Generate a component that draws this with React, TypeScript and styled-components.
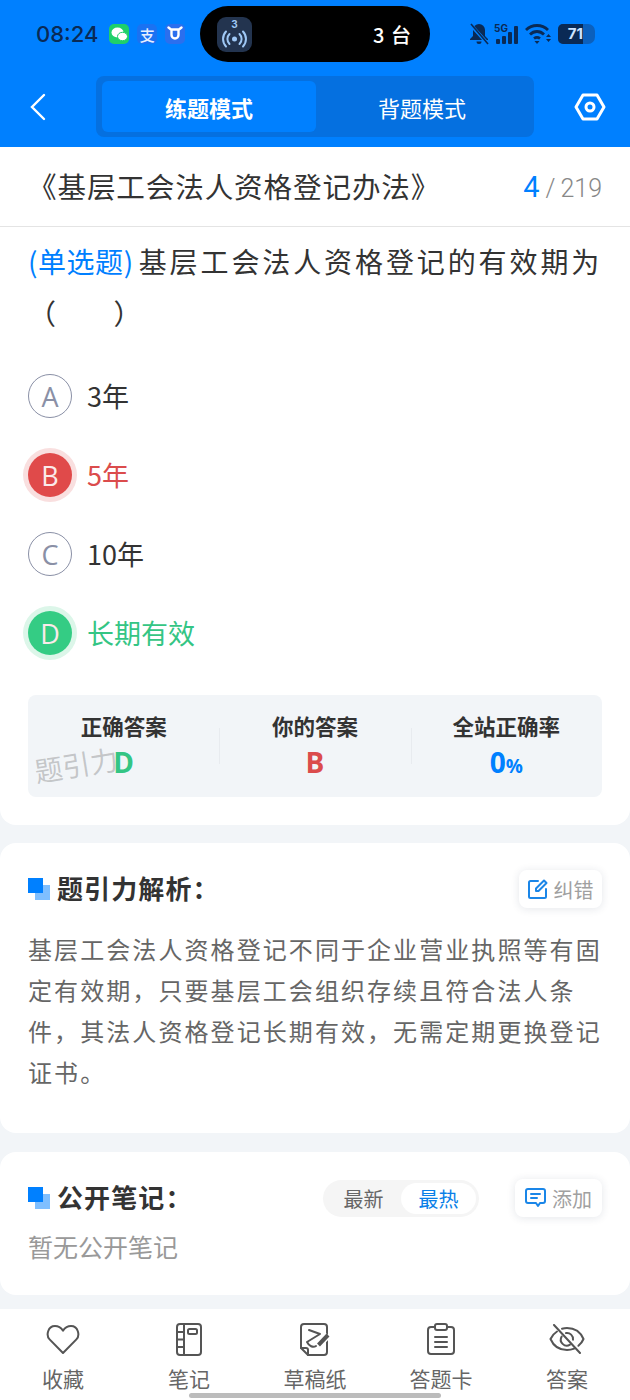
import styled, { createGlobalStyle } from 'styled-components';

const GlobalStyle = createGlobalStyle`
  html, body {
    margin: 0;
    padding: 0;
    background: #f2f5f8;
    font-family: 'Noto Sans CJK SC', 'Noto Sans', sans-serif;
  }
  * {
    box-sizing: border-box;
  }
`;

const Page = styled.div`
  position: relative;
  width: 630px;
  height: 1400px;
  overflow: hidden;
  display: flex;
  flex-direction: column;
  background: #f2f5f8;
`;

const Header = styled.header`
  height: 147px;
  flex: none;
  background: #0080ff;
  color: #fff;
`;

const StatusBar = styled.div`
  height: 76px;
  padding: 6px 0 0 36px;
  display: flex;
  align-items: flex-start;
`;

const StatusLeft = styled.div`
  width: 164px;
  height: 56px;
  display: flex;
  align-items: center;
  gap: 8px;
`;

const Time = styled.span`
  font-family: Inter, sans-serif;
  font-size: 22px;
  font-weight: 500;
  color: #0a2a55;
  margin-right: 3px;
`;

const AppBadge = styled.span<{ $bg: string }>`
  width: 20px;
  height: 20px;
  border-radius: 5px;
  background: ${(p) => p.$bg};
  display: flex;
  align-items: center;
  justify-content: center;
  font-size: 15px;
  font-weight: 500;
  line-height: 1;
  color: #e6efff;
`;

const Island = styled.div`
  width: 230px;
  height: 56px;
  border-radius: 28px;
  background: #000;
  display: flex;
  align-items: center;
  justify-content: space-between;
  padding: 0 18px 0 17px;
`;

const IslandIcon = styled.div`
  width: 35px;
  height: 35px;
  border-radius: 9px;
  background: #23344f;
  display: flex;
  align-items: center;
  justify-content: center;
`;

const IslandText = styled.span`
  font-size: 20px;
  font-weight: 500;
  color: #fff;
  letter-spacing: 1px;
`;

const StatusRight = styled.div`
  margin-left: 39px;
  height: 56px;
  display: flex;
  align-items: center;
  gap: 5px;
`;

const Battery = styled.div`
  width: 37px;
  height: 20px;
  border-radius: 5px 7px 7px 5px;
  background: #0b60bd;
  overflow: hidden;
  display: flex;
`;

const BatteryFill = styled.div`
  width: 25px;
  background: #0a2a55;
  color: #cfe4ff;
  font-family: Inter, sans-serif;
  font-size: 15px;
  font-weight: 700;
  line-height: 20px;
  text-align: right;
`;

const NavBar = styled.nav`
  height: 61px;
  padding: 0 24px 0 30px;
  display: flex;
  align-items: center;
`;

const ModeTabs = styled.div`
  margin-left: 50px;
  width: 438px;
  height: 61px;
  padding: 5px 6px;
  border-radius: 8px;
  background: #0570e0;
  display: grid;
  grid-template-columns: 214px 1fr;
`;

const ModeTab = styled.div<{ $active?: boolean }>`
  border-radius: 6px;
  background: ${(p) => (p.$active ? '#0080ff' : 'transparent')};
  font-size: 22px;
  font-weight: ${(p) => (p.$active ? 700 : 400)};
  display: flex;
  align-items: center;
  justify-content: center;
`;

const SettingsButton = styled.div`
  margin-left: auto;
  display: flex;
`;

const QuestionCard = styled.section`
  height: 678px;
  flex: none;
  background: #fff;
  border-radius: 0 0 16px 16px;
`;

const TitleRow = styled.div`
  height: 80px;
  padding: 0 28px;
  border-bottom: 1px solid #e4e4e4;
  display: flex;
  align-items: center;
  justify-content: space-between;
`;

const PaperTitle = styled.h1`
  margin: -2px 0 0 0;
  font-size: 28.6px;
  font-weight: 400;
  letter-spacing: 0.85px;
  color: #333;
`;

const Pager = styled.div`
  font-family: Roboto, sans-serif;
  font-size: 25px;
  font-weight: 300;
  color: #888;
  display: flex;
  align-items: baseline;
`;

const PagerCurrent = styled.span`
  font-size: 29px;
  font-weight: 400;
  color: #0080ff;
  margin-right: 6px;
`;

const PagerSlash = styled.span`
  margin-right: 5px;
`;

const QuestionText = styled.p`
  margin: 8px 24px 0 28px;
  font-size: 28px;
  line-height: 52px;
  letter-spacing: 2.9px;
  color: #333;
`;

const QuestionType = styled.span`
  color: #0080ff;
  letter-spacing: 0.55px;
  margin-right: 5px;
`;

const BlankBrackets = styled.span`
  letter-spacing: 0.5px;
`;

const Options = styled.div`
  margin: 35px 28px 0;
  display: flex;
  flex-direction: column;
  gap: 35px;
`;

const Option = styled.div`
  display: flex;
  align-items: center;
  gap: 15px;
  height: 44px;
`;

const OptionMark = styled.div<{ $tone?: 'right' | 'wrong' }>`
  width: 44px;
  height: 44px;
  flex: none;
  border-radius: 50%;
  display: flex;
  align-items: center;
  justify-content: center;
  font-family: 'Open Sans', sans-serif;
  font-size: 27px;
  color: ${(p) => (p.$tone ? '#fbeaea' : '#8a90a6')};
  border: ${(p) => (p.$tone ? 'none' : '1px solid #8a90a6')};
  background: ${(p) =>
    p.$tone === 'right' ? '#34cc84' : p.$tone === 'wrong' ? '#e04a4a' : 'transparent'};
  box-shadow: ${(p) =>
    p.$tone === 'right'
      ? '0 0 0 5px #dcf6e9'
      : p.$tone === 'wrong'
        ? '0 0 0 5px #f9dfdf'
        : 'none'};
`;

const OptionText = styled.span<{ $tone?: 'right' | 'wrong' }>`
  font-size: 27px;
  margin-top: -2px;
  color: ${(p) =>
    p.$tone === 'right' ? '#34c584' : p.$tone === 'wrong' ? '#db4c4c' : '#333'};
`;

const Summary = styled.div`
  position: relative;
  margin: 40px 28px 0;
  height: 102px;
  border-radius: 8px;
  background: #f2f5f8;
  display: grid;
  grid-template-columns: repeat(3, 1fr);
  padding-top: 16px;
`;

const SummaryCell = styled.div<{ $divided?: boolean }>`
  position: relative;
  height: 58px;
  display: flex;
  flex-direction: column;
  align-items: center;
  &::before {
    content: ${(p) => (p.$divided ? "''" : 'none')};
    position: absolute;
    left: 0;
    top: 17px;
    width: 1px;
    height: 36px;
    background: #e8ebef;
  }
`;

const SummaryLabel = styled.div`
  font-size: 21.5px;
  font-weight: 700;
  line-height: 30px;
  color: #333;
`;

const SummaryValue = styled.div<{ $color: string }>`
  font-family: 'Open Sans', sans-serif;
  font-size: 28px;
  font-weight: 700;
  line-height: 42px;
  color: ${(p) => p.$color};
`;

const SummaryUnit = styled.span`
  font-size: 19px;
`;

const Watermark = styled.div`
  position: absolute;
  left: 6px;
  top: 50px;
  font-size: 28px;
  line-height: 38px;
  color: rgba(120, 120, 120, 0.38);
  transform: rotate(-9deg);
`;

const Panel = styled.section<{ $height: number; $gap: number }>`
  margin-top: ${(p) => p.$gap}px;
  height: ${(p) => p.$height}px;
  flex: none;
  background: #fff;
  border-radius: 16px;
  padding: 27px 28px 0;
`;

const PanelHeader = styled.div`
  height: 38px;
  display: flex;
  align-items: center;
  gap: 7px;
`;

const Squares = styled.div`
  position: relative;
  width: 22px;
  height: 22px;
  flex: none;
  background: linear-gradient(#7fbfff, #7fbfff) 7px 7px / 15px 15px no-repeat;
  &::before {
    content: '';
    position: absolute;
    left: 0;
    top: 0;
    width: 15px;
    height: 15px;
    background: #0080ff;
  }
`;

const PanelTitle = styled.h2`
  margin: -4px 0 0;
  font-size: 26px;
  font-weight: 700;
  letter-spacing: 1.1px;
  color: #333;
`;

const ActionButton = styled.div<{ $left: string; $width: number }>`
  margin-left: ${(p) => p.$left};
  width: ${(p) => p.$width}px;
  height: 38px;
  border-radius: 8px;
  background: #fff;
  box-shadow: 0 1px 8px rgba(30, 50, 80, 0.12);
  display: flex;
  align-items: center;
  justify-content: center;
  gap: 6px;
  font-size: 20px;
  color: #a0a0a0;
`;

const Analysis = styled.p`
  margin: 20px 0 0;
  font-size: 24px;
  line-height: 41px;
  letter-spacing: 2.08px;
  color: #666;
`;

const SortToggle = styled.div`
  margin-left: auto;
  width: 156px;
  height: 37px;
  border-radius: 19px;
  background: #f5f5f5;
  padding: 3px;
  display: grid;
  grid-template-columns: 1fr 75px;
  font-size: 20px;
`;

const SortOption = styled.div<{ $active?: boolean }>`
  border-radius: 16px;
  display: flex;
  align-items: center;
  justify-content: center;
  background: ${(p) => (p.$active ? '#fff' : 'transparent')};
  color: ${(p) => (p.$active ? '#0a7fe8' : '#666')};
`;

const EmptyNote = styled.div`
  margin-top: 11px;
  font-size: 25px;
  line-height: 36px;
  color: #999;
`;

const BottomBar = styled.footer`
  margin-top: 14px;
  flex: 1;
  background: #fff;
  display: grid;
  grid-template-columns: repeat(5, 1fr);
  padding-top: 8px;
`;

const BarItem = styled.div`
  display: flex;
  flex-direction: column;
  align-items: center;
  font-size: 21px;
  line-height: 30px;
  color: #666;
`;

const BarIcon = styled.div`
  height: 44px;
  margin-bottom: 2px;
  display: flex;
  align-items: center;
`;

const HomeIndicator = styled.div`
  position: absolute;
  left: 189px;
  bottom: 2px;
  width: 252px;
  height: 5px;
  border-radius: 3px;
  background: #bcbcbc;
`;

const options = [
  { mark: 'A', text: '3年' },
  { mark: 'B', text: '5年', tone: 'wrong' as const },
  { mark: 'C', text: '10年' },
  { mark: 'D', text: '长期有效', tone: 'right' as const },
];

const stroke = {
  fill: 'none',
  stroke: '#555',
  strokeWidth: 2,
  strokeLinecap: 'round' as const,
  strokeLinejoin: 'round' as const,
};

const barItems = [
  {
    label: '收藏',
    icon: (
      <svg width="34" height="32" viewBox="0 0 34 32" {...stroke}>
        <path d="M17 30 3.6 16.4C-.2 12.4 1.8 3 9 3c3.6 0 6.2 2 8 4.6C18.800 5 21.400 3 25 3c7.200 0 9.200 9.400 5.400 13.400z" />
      </svg>
    ),
  },
  {
    label: '笔记',
    icon: (
      <svg width="26" height="33" viewBox="0 0 26 33" {...stroke}>
        <rect x="1" y="1" width="24" height="31" rx="3" />
        <path d="M8 1v31M1 9h7M1 16.500h7M1 24h7" />
        <rect x="12" y="6" width="9" height="5" rx="1.500" />
      </svg>
    ),
  },
  {
    label: '草稿纸',
    icon: (
      <svg width="31" height="33" viewBox="0 0 31 33" {...stroke}>
        <path d="M1 25V4a3 3 0 0 1 3-3h20a3 3 0 0 1 3 3v25a3 3 0 0 1-3 3H8z" />
        <path d="M1 25h5a2 2 0 0 1 2 2v5" />
        <path d="M9 7l11 4-13 8c2 4 6 6 9 4" />
        <path d="M18 23l10-11" stroke="#fff" strokeWidth="7" strokeLinecap="butt" />
        <path d="M18.500 22l9.500-10" strokeWidth="4" strokeLinecap="butt" />
      </svg>
    ),
  },
  {
    label: '答题卡',
    icon: (
      <svg width="28" height="32" viewBox="0 0 28 32" {...stroke}>
        <path d="M8 4H4a3 3 0 0 0-3 3v21a3 3 0 0 0 3 3h20a3 3 0 0 0 3-3V7a3 3 0 0 0-3-3h-4" />
        <rect x="8" y="1" width="12" height="6" rx="2" />
        <path d="M8 14h12M8 19h12M8 24h12" />
      </svg>
    ),
  },
  {
    label: '答案',
    icon: (
      <svg width="36" height="30" viewBox="0 0 36 30" {...stroke}>
        <path d="M5 1l26 28" />
        <path d="M8 7.500C5 9.400 2.800 12 1.500 15c3 7 9 11 16.500 11 2.600 0 5-.5 7.200-1.400M13 4.700C14.500 4.300 16.200 4 18 4c7.500 0 13.500 4 16.500 11-1.100 2.700-2.900 5-5.100 6.800" />
        <path d="M12.700 12.500A6 6 0 0 0 21 20.700M17 9.100a6 6 0 0 1 7 6.600" />
      </svg>
    ),
  },
];

export default function App() {
  return (
    <>
      <GlobalStyle />
      <Page>
        <Header>
          <StatusBar>
            <StatusLeft>
              <Time>08:24</Time>
              <AppBadge $bg="#1fd06a">
                <svg width="17" height="15" viewBox="0 0 17 15" fill="#fff">
                  <ellipse cx="6.500" cy="5.500" rx="6" ry="5" />
                  <ellipse cx="11.500" cy="9.500" rx="5" ry="4.200" stroke="#1fd06a" />
                </svg>
              </AppBadge>
              <AppBadge $bg="#1a72f2">支</AppBadge>
              <AppBadge $bg="#2b6fee">
                <svg width="16" height="16" viewBox="0 0 16 16" fill="none" stroke="#fff" strokeWidth="2.400" strokeLinecap="round">
                  <path d="M1.500 1.500 4 3.500h8l2.500-2M4.500 3.500V9a3.500 3.500 0 0 0 7 0V3.500" />
                </svg>
              </AppBadge>
            </StatusLeft>
            <Island>
              <IslandIcon>
                <svg width="29" height="32" viewBox="0 0 29 32" fill="none" stroke="#9fc8f5" strokeWidth="2" strokeLinecap="round">
                  <circle cx="14.500" cy="21" r="2.500" fill="#9fc8f5" stroke="none" />
                  <path d="M9.500 16a7 7 0 0 0 0 10M19.500 16a7 7 0 0 1 0 10M6 13.500a11 11 0 0 0 0 15M23 13.500a11 11 0 0 1 0 15" />
                  <text x="14.500" y="10" textAnchor="middle" fontSize="10" fontWeight="700" fill="#9fc8f5" stroke="none" fontFamily="Inter, sans-serif">3</text>
                </svg>
              </IslandIcon>
              <IslandText>3 台</IslandText>
            </Island>
            <StatusRight>
              <svg width="20" height="22" viewBox="0 0 20 22" fill="#0a2a55">
                <path d="M10 1a6 6 0 0 0-6 6v6l-3 3v1h18v-1l-3-3V7a6 6 0 0 0-6-6zM7.500 18.500h5a2.500 2.500 0 0 1-5 0z" />
                <path d="M1 1l18 20" stroke="#0080ff" strokeWidth="3.500" />
                <path d="M2 1l17 20" stroke="#0a2a55" strokeWidth="1.600" />
              </svg>
              <svg width="26" height="22" viewBox="0 0 26 22" fill="#0a2a55">
                <text x="0" y="9" fontSize="10" fontWeight="700" fontFamily="Inter, sans-serif">5G</text>
                <rect x="2" y="16" width="4" height="5" rx="1" />
                <rect x="8" y="13" width="4" height="8" rx="1" />
                <rect x="14" y="9" width="4" height="12" rx="1" />
                <rect x="20" y="3" width="4" height="18" rx="1" />
              </svg>
              <svg width="28" height="22" viewBox="0 0 28 22" fill="none" stroke="#0a2a55" strokeWidth="2.800">
                <path d="M1 7c6-6 16-6 22 0M5 11.500c4-4 10-4 14 0M9 15.500c2-1.500 4-1.500 6 0" />
                <path d="M9.500 18h5L12 21z" fill="#0a2a55" stroke="none" />
                <path d="M21 14l2.500-3 2.500 3zM21 16h5l-2.500 3z" fill="#0a2a55" stroke="none" />
              </svg>
              <Battery>
                <BatteryFill>71</BatteryFill>
              </Battery>
            </StatusRight>
          </StatusBar>
          <NavBar>
            <svg width="16" height="28" viewBox="0 0 16 28" fill="none" stroke="#fff" strokeWidth="2.400" strokeLinecap="round">
              <path d="M14 2 2 14l12 12" />
            </svg>
            <ModeTabs>
              <ModeTab $active>练题模式</ModeTab>
              <ModeTab>背题模式</ModeTab>
            </ModeTabs>
            <SettingsButton>
              <svg width="32" height="28" viewBox="0 0 32 28" fill="none" stroke="#fff" strokeWidth="3">
                <path d="M9 2h14l7 12-7 12H9L2 14z" strokeLinejoin="round" />
                <circle cx="16" cy="14" r="4" />
              </svg>
            </SettingsButton>
          </NavBar>
        </Header>

        <QuestionCard>
          <TitleRow>
            <PaperTitle>《基层工会法人资格登记办法》</PaperTitle>
            <Pager>
              <PagerCurrent>4</PagerCurrent>
              <PagerSlash>/</PagerSlash>
              219
            </Pager>
          </TitleRow>
          <QuestionText>
            <QuestionType>(单选题)</QuestionType>
            基层工会法人资格登记的有效期为<BlankBrackets>（　　）</BlankBrackets>
          </QuestionText>
          <Options>
            {options.map(({ mark, text, tone }) => (
              <Option key={mark}>
                <OptionMark $tone={tone}>{mark}</OptionMark>
                <OptionText $tone={tone}>{text}</OptionText>
              </Option>
            ))}
          </Options>
          <Summary>
            <SummaryCell>
              <SummaryLabel>正确答案</SummaryLabel>
              <SummaryValue $color="#34c584">D</SummaryValue>
            </SummaryCell>
            <SummaryCell $divided>
              <SummaryLabel>你的答案</SummaryLabel>
              <SummaryValue $color="#db4c4c">B</SummaryValue>
            </SummaryCell>
            <SummaryCell $divided>
              <SummaryLabel>全站正确率</SummaryLabel>
              <SummaryValue $color="#0080ff">
                0<SummaryUnit>%</SummaryUnit>
              </SummaryValue>
            </SummaryCell>
            <Watermark>题引力</Watermark>
          </Summary>
        </QuestionCard>

        <Panel $height={290} $gap={18}>
          <PanelHeader>
            <Squares />
            <PanelTitle>题引力解析：</PanelTitle>
            <ActionButton $left="auto" $width={83}>
              <svg width="20" height="20" viewBox="0 0 20 20" fill="none" stroke="#1a86e8" strokeWidth="2" strokeLinecap="round" strokeLinejoin="round">
                <path d="M10 2H2.500A1.500 1.500 0 0 0 1 3.500v14A1.500 1.500 0 0 0 2.500 19h14a1.500 1.500 0 0 0 1.500-1.500V10" />
                <path d="M8 9.500 16 1.500l2.500 2.500-8 8H8z" />
              </svg>
              纠错
            </ActionButton>
          </PanelHeader>
          <Analysis>
            基层工会法人资格登记不同于企业营业执照等有固定有效期，只要基层工会组织存续且符合法人条件，其法人资格登记长期有效，无需定期更换登记证书。
          </Analysis>
        </Panel>

        <Panel $height={143} $gap={19}>
          <PanelHeader>
            <Squares />
            <PanelTitle>公开笔记：</PanelTitle>
            <SortToggle>
              <SortOption>最新</SortOption>
              <SortOption $active>最热</SortOption>
            </SortToggle>
            <ActionButton $left="29px" $width={87}>
              <svg width="21" height="20" viewBox="0 0 21 20" fill="none" stroke="#1a86e8" strokeWidth="2" strokeLinecap="round" strokeLinejoin="round">
                <path d="M3 1h15a2 2 0 0 1 2 2v10a2 2 0 0 1-2 2h-3l-2 3-2-3H3a2 2 0 0 1-2-2V3a2 2 0 0 1 2-2z" />
                <path d="M6 6h9M6 10h6" />
              </svg>
              添加
            </ActionButton>
          </PanelHeader>
          <EmptyNote>暂无公开笔记</EmptyNote>
        </Panel>

        <BottomBar>
          {barItems.map(({ label, icon }) => (
            <BarItem key={label}>
              <BarIcon>{icon}</BarIcon>
              {label}
            </BarItem>
          ))}
        </BottomBar>
        <HomeIndicator />
      </Page>
    </>
  );
}
